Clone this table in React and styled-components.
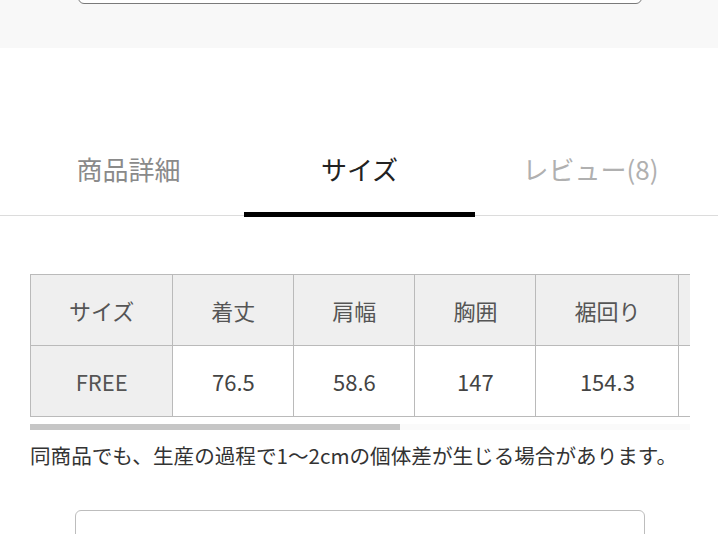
import React, { useEffect, useRef, useState } from "react";
import styled, { createGlobalStyle } from "styled-components";

const GlobalStyle = createGlobalStyle`
  body {
    margin: 0;
    background: #fff;
    font-family: "Noto Sans CJK JP", "Noto Sans", sans-serif;
    overflow: hidden;
  }
`;

const Page = styled.div`
  width: 718px;
  height: 534px;
  overflow: hidden;
  background: #fff;
`;

// 上部のグレー帯（カートボタンの下端だけ見えている）
const TopBand = styled.div`
  height: 48px;
  background: #f8f8f8;
  padding: 0 76px 0 78px;
  overflow: hidden;
`;

const TopButton = styled.div`
  height: 50px;
  margin-top: -48px;
  border: 1.5px solid #7a7a7a;
  border-radius: 6px;
  background: #fff;
`;

const TabBar = styled.div`
  display: flex;
  padding: 103px 12px 0 13px;
  border-bottom: 1px solid #dcdcdc;
`;

const Tab = styled.div`
  flex: 1;
  text-align: center;
  font-size: 26px;
  line-height: 36px;
  padding-bottom: 25px;
  margin-bottom: -2px;
  color: ${(p) => (p.$active ? "#222" : p.$light ? "#b0b0b0" : "#8a8a8a")};
  border-bottom: 5px solid ${(p) => (p.$active ? "#000" : "transparent")};
  cursor: pointer;
`;

const Section = styled.div`
  padding: 58px 28px 0 30px;
`;

const Scroller = styled.div`
  overflow-x: auto;
  scrollbar-width: none;
  &::-webkit-scrollbar {
    display: none;
  }
`;

// スクロールバー（thumb幅はスクロール量から計算）
const ScrollTrack = styled.div`
  height: 6px;
  margin-top: 7px;
  background: #fafafa;
`;

const ScrollThumb = styled.div`
  height: 100%;
  background: #c6c6c6;
`;

const Table = styled.table`
  border-collapse: collapse;
  white-space: nowrap;
`;

const Cell = styled.td`
  height: 70px;
  padding: 0 38px;
  border: 1px solid #bababa;
  font-size: 22px;
  line-height: 1;
  text-align: center;
  vertical-align: middle;
  color: ${(p) => (p.$head ? "#555" : "#444")};
  background: ${(p) => (p.$head ? "#efefef" : "#fff")};
`;

const Note = styled.p`
  margin: 10px 0 0;
  font-size: 20.6px;
  line-height: 30px;
  color: #333;
  white-space: nowrap;
`;

const BottomBox = styled.div`
  margin: 40px 73px 0 75px;
  height: 60px;
  border: 1px solid #bdbdbd;
  border-radius: 6px;
`;

const heads = ["サイズ", "着丈", "肩幅", "胸囲", "裾回り", "袖丈", "袖口周り", "裄丈", "総丈"];
const values = ["FREE", "76.5", "58.6", "147", "154.3", "45.5", "30.0", "78.0", "82.0"];

const App = () => {
  const [tab, setTab] = useState("サイズ");
  const scrollRef = useRef(null);
  const [thumb, setThumb] = useState({ width: 369, left: 0 });

  const updateThumb = () => {
    const el = scrollRef.current;
    if (!el) return;
    const track = el.clientWidth;
    const ratio = track / el.scrollWidth;
    setThumb({
      width: Math.round(track * ratio),
      left: Math.round(el.scrollLeft * ratio),
    });
  };

  useEffect(() => {
    updateThumb();
  }, []);

  return (
    <Page>
      <GlobalStyle />
      <TopBand>
        <TopButton />
      </TopBand>
      <TabBar>
        <Tab $active={tab === "商品詳細"} onClick={() => setTab("商品詳細")}>
          商品詳細
        </Tab>
        <Tab $active={tab === "サイズ"} onClick={() => setTab("サイズ")}>
          サイズ
        </Tab>
        <Tab $active={tab === "レビュー"} $light onClick={() => setTab("レビュー")}>
          レビュー(8)
        </Tab>
      </TabBar>
      <Section>
        <Scroller ref={scrollRef} onScroll={updateThumb}>
          <Table>
            <tbody>
              <tr>
                {heads.map((h, i) => (
                  <Cell key={i} $head>
                    {h}
                  </Cell>
                ))}
              </tr>
              <tr>
                {values.map((v, i) => (
                  <Cell key={i} $head={i === 0}>
                    {v}
                  </Cell>
                ))}
              </tr>
            </tbody>
          </Table>
        </Scroller>
        <ScrollTrack>
          <ScrollThumb style={{ width: thumb.width, marginLeft: thumb.left }} />
        </ScrollTrack>
        <Note>同商品でも、生産の過程で1〜2cmの個体差が生じる場合があります。</Note>
      </Section>
      <BottomBox />
    </Page>
  );
};

export default App;
